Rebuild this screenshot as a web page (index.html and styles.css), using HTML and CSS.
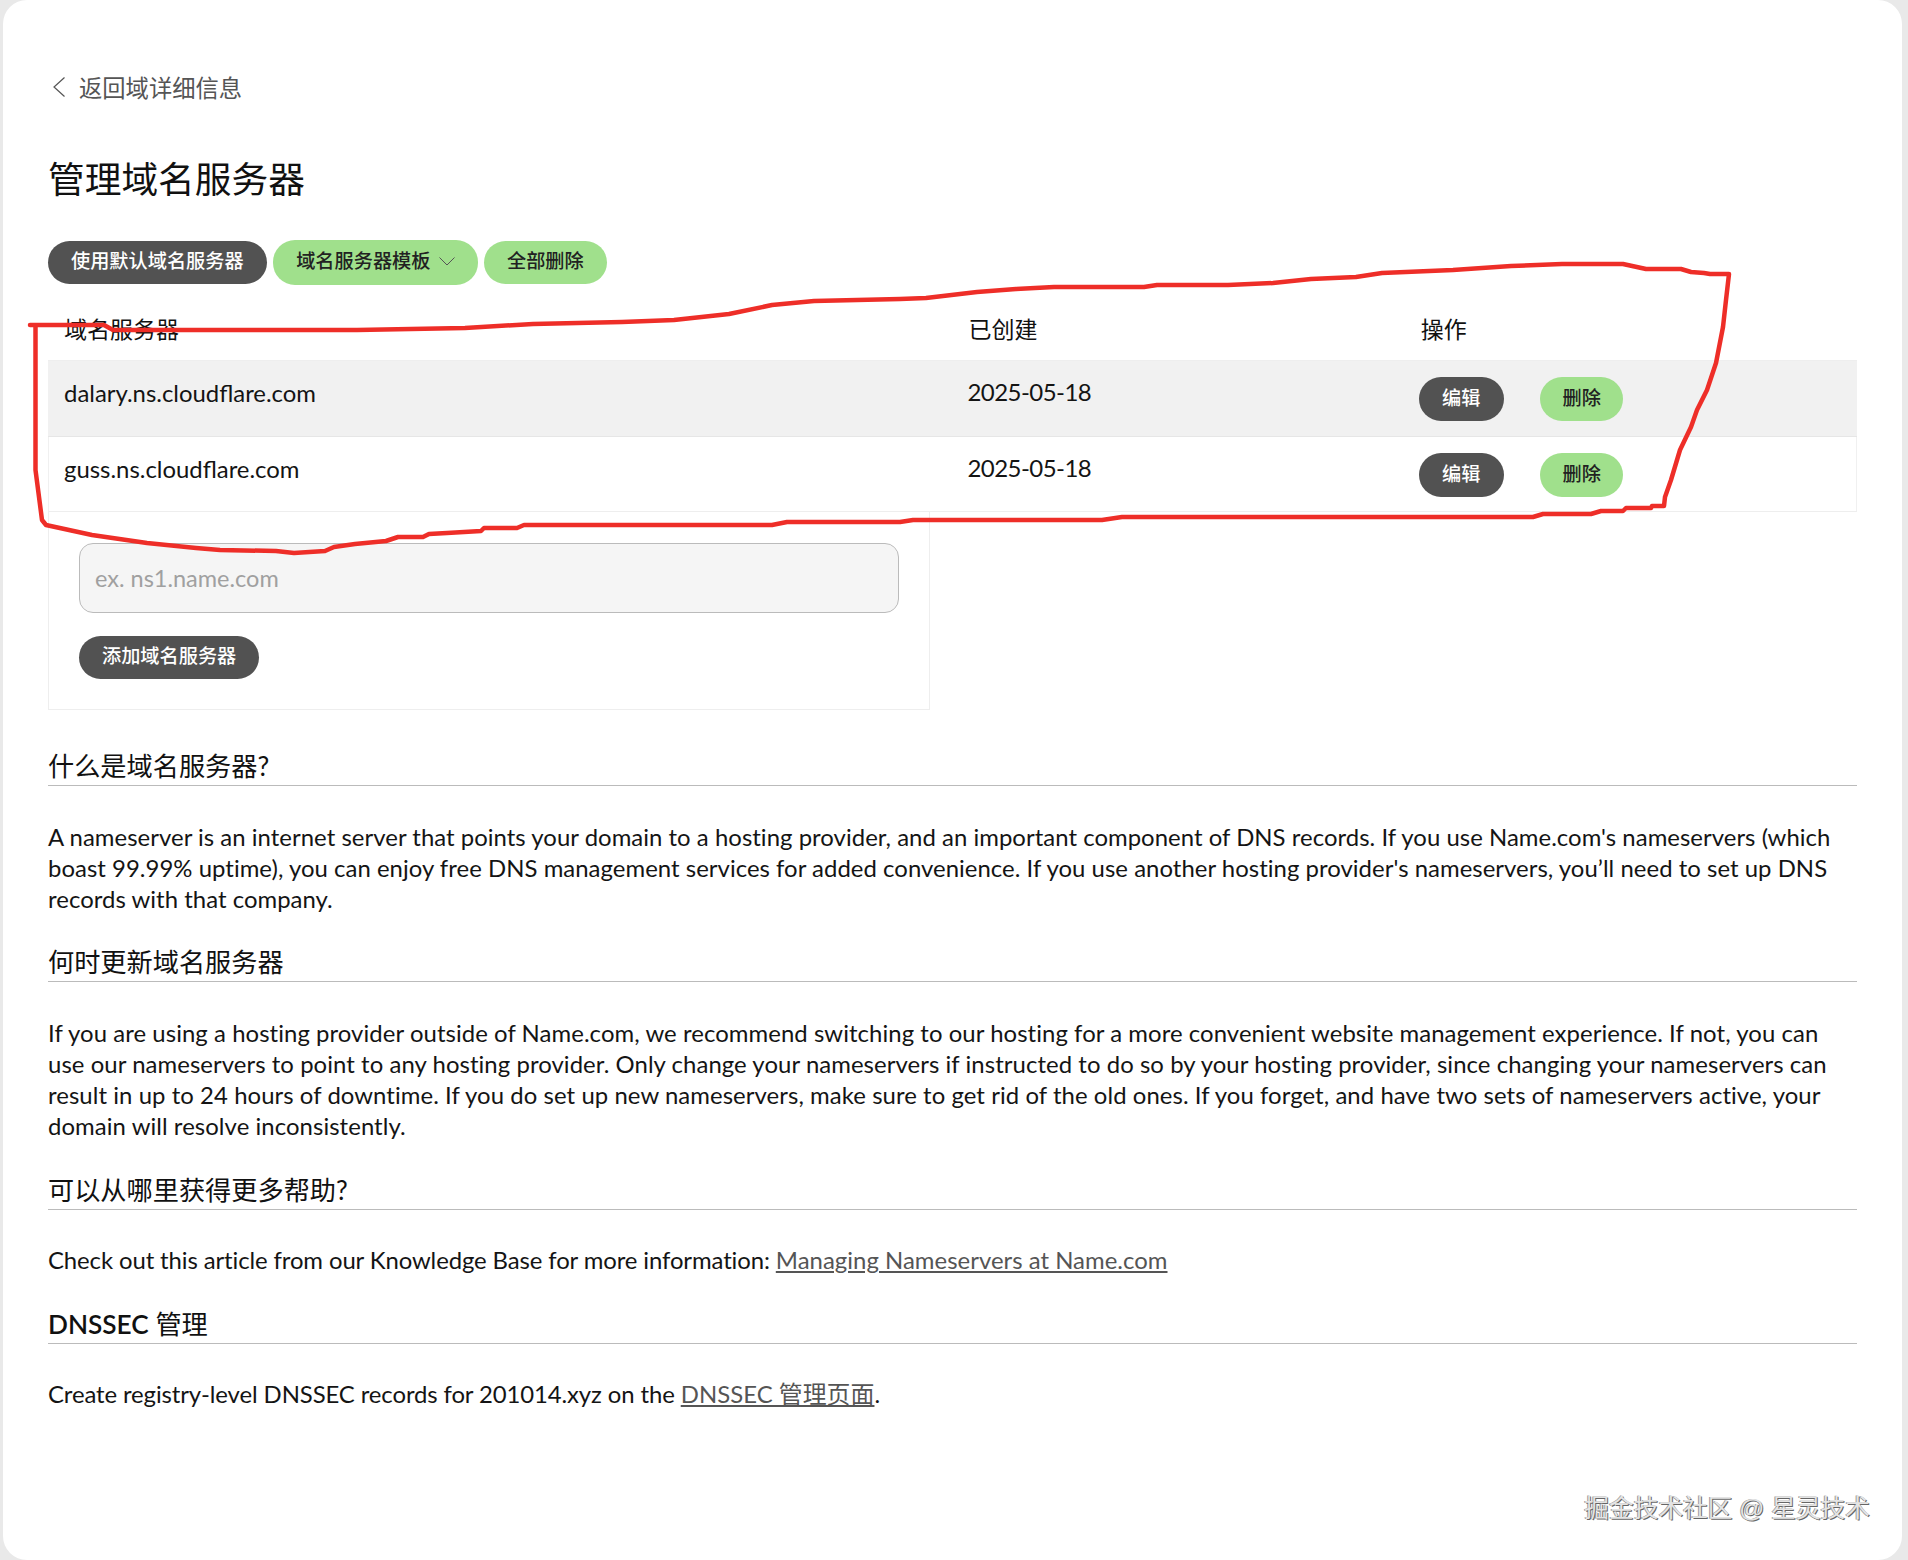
FILE: index.html
```html
<!DOCTYPE html>
<html lang="zh-CN">
<head>
<meta charset="utf-8">
<title>管理域名服务器</title>
<link rel="stylesheet" href="styles.css">
</head>
<body>
<main class="card">
  <a class="back" href="#">
    <svg class="back-icon" viewBox="0 0 12 20"><path d="M11.5 0.5 L1 10 L11.5 19.5"/></svg>
    <span>返回域详细信息</span>
  </a>
  <h1 class="title">管理域名服务器</h1>
  <div class="actions">
    <button class="btn btn-dark">使用默认域名服务器</button>
    <button class="btn btn-green btn-tall">域名服务器模板
      <svg class="caret" viewBox="0 0 16 9"><path d="M0.5 0.5 L8 8 L15.5 0.5"/></svg>
    </button>
    <button class="btn btn-green">全部删除</button>
  </div>
  <div class="table">
    <div class="row head">
      <div class="cell">域名服务器</div>
      <div class="cell">已创建</div>
      <div class="cell">操作</div>
    </div>
    <div class="row shaded">
      <div class="cell host">dalary.ns.cloudflare.com</div>
      <div class="cell date">2025-05-18</div>
      <div class="cell ops"><button class="btn btn-dark btn-edit">编辑</button><button class="btn btn-green btn-del">删除</button></div>
    </div>
    <div class="row plain">
      <div class="cell host">guss.ns.cloudflare.com</div>
      <div class="cell date">2025-05-18</div>
      <div class="cell ops"><button class="btn btn-dark btn-edit">编辑</button><button class="btn btn-green btn-del">删除</button></div>
    </div>
  </div>
  <form class="add-box">
    <input class="input" type="text" placeholder="ex. ns1.name.com">
    <button class="btn btn-dark" type="button">添加域名服务器</button>
  </form>

  <h2 class="heading h-first">什么是域名服务器?</h2>
  <p class="para para-mid">A nameserver is an internet server that points your domain to a hosting provider, and an important component of DNS records. If you use Name.com's nameservers (which boast 99.99% uptime), you can enjoy free DNS management services for added convenience. If you use another hosting provider's nameservers, you’ll need to set up DNS records with that company.</p>

  <h2 class="heading">何时更新域名服务器</h2>
  <p class="para para-wide">If you are using a hosting provider outside of Name.com, we recommend switching to our hosting for a more convenient website management experience. If not, you can use our nameservers to point to any hosting provider. Only change your nameservers if instructed to do so by your hosting provider, since changing your nameservers can result in up to 24 hours of downtime. If you do set up new nameservers, make sure to get rid of the old ones. If you forget, and have two sets of nameservers active, your domain will resolve inconsistently.</p>

  <h2 class="heading">可以从哪里获得更多帮助?</h2>
  <p class="para para-tight">Check out this article from our Knowledge Base for more information: <a href="#">Managing Nameservers at Name.com</a></p>

  <h2 class="heading"><span class="heading-strong">DNSSEC</span> 管理</h2>
  <p class="para para-tight">Create registry-level DNSSEC records for 201014.xyz on the <a href="#">DNSSEC 管理页面</a>.</p>
</main>

<svg class="annotation" viewBox="0 0 1908 1560">
  <polyline points="30,325 104,325 113,330 357,330 465,328 533,324 622,322 674,320 729,314 772,305 814,301 900,299 926,298 977,292 1016,289 1054,287 1144,287 1157,285 1228,285 1273,283 1311,279 1356,277 1382,273 1453,270 1511,266 1562,264 1623,264 1646,269 1681,269 1691,272 1704,273 1710,274 1729,274 1726,300 1723,327 1716,363 1707,390 1697,410 1691,427 1680,450 1671,480 1665,497 1664,506 1652,506 1651,508 1626,508 1623,511 1601,511 1591,514 1543,514 1533,517 1122,517 1102,520 913,520 900,522 787,522 772,525 524,525 517,528 484,528 481,531 447,533 429,534 423,537 398,537 386,541 355,544 334,547 325,551 294,553 276,551 220,550 196,548 147,543 92,535 46,525 42,520 35.5,470 35.5,326"/>
</svg>
<div class="watermark">掘金技术社区 @ 星灵技术</div>
</body>
</html>
```

FILE: styles.css
```css
* { box-sizing: border-box; }

html, body { margin: 0; padding: 0; }

body {
  position: relative;
  width: 1908px;
  height: 1560px;
  overflow: hidden;
  background: #e9e9e9;
  color: #141414;
  font-family: "Lato", "Noto Sans CJK SC", sans-serif;
  font-size: 23px;
}

.card {
  width: 1899px;
  height: 1560px;
  margin-left: 3px;
  padding: 72px 45px 0;
  background: #fff;
  border-radius: 24px;
}

.back {
  display: flex;
  align-items: center;
  gap: 14px;
  height: 30px;
  color: #555;
  text-decoration: none;
  font-size: 23.3px;
}

.back-icon {
  width: 12px;
  height: 20px;
  margin-left: 5px;
  fill: none;
  stroke: #555;
  stroke-width: 1.2;
}

.title {
  margin: 54px 0 0;
  font-size: 36.7px;
  line-height: 46px;
  font-weight: 400;
  color: #111;
}

.actions {
  display: flex;
  align-items: center;
  gap: 6.5px;
  margin-top: 38px;
  height: 45px;
}

.btn {
  display: inline-flex;
  align-items: center;
  justify-content: center;
  gap: 8px;
  height: 43px;
  padding: 0 23px 3px;
  border: 0;
  border-radius: 22px;
  font-family: inherit;
  font-size: 19.2px;
  font-weight: 500;
  line-height: 1;
  white-space: nowrap;
}

.btn-tall { height: 45px; }

.btn-dark { background: #525252; color: #fff; }

.btn-green { background: #a0e08c; color: #222; }

.btn-edit { width: 85px; height: 44px; padding: 0 0 3px; }

.btn-del { width: 83px; height: 44px; padding: 0 0 3px; }

.caret {
  width: 16px;
  height: 9px;
  fill: none;
  stroke: #555;
  stroke-width: 1;
}

.table { margin-top: 14px; }

.row {
  display: grid;
  grid-template-columns: 2fr 1fr 1fr;
}

.head { height: 62px; padding-top: 14px; border-bottom: 1px solid #eee; }

.head .cell { padding-top: 0; line-height: 32px; color: #111; }

.shaded {
  height: 76px;
  background: #f1f1f1;
  border-bottom: 1px solid #e6e6e6;
}

.plain {
  height: 75px;
  border-bottom: 1px solid #eee;
  box-shadow: inset 1px 0 0 #f0f0f0, inset -1px 0 0 #f0f0f0;
}

.cell {
  padding: 16px 16px 0;
  line-height: 31px;
}

.host { font-size: 23.9px; }

.date { font-size: 24px; letter-spacing: -0.55px; padding: 15px 16px 0 15px; }

.ops {
  display: flex;
  align-items: flex-start;
  gap: 36.5px;
  padding-left: 14px;
}

.add-box {
  display: flex;
  flex-direction: column;
  align-items: flex-start;
  gap: 23px;
  width: 882px;
  height: 198px;
  padding: 31px 30px 0;
  border: 1px solid #eee;
  border-top: 0;
}

.input {
  width: 820px;
  height: 70px;
  padding: 0 15px 1px;
  background: #f5f5f5;
  border: 1px solid #bbb;
  border-radius: 14px;
  font-family: inherit;
  font-size: 23.5px;
}

.input::placeholder { color: #a0a0a0; opacity: 1; }

.heading {
  margin: 31.35px 0 0;
  padding-bottom: 1px;
  font-size: 26.2px;
  line-height: 35px;
  font-weight: 400;
  color: #111;
  border-bottom: 1px solid #bbb;
}

.h-first { margin-top: 39px; }

.heading-strong { font-weight: 600; }

.para {
  margin: 34.5px 0 0;
  font-size: 23.9px;
  line-height: 31.15px;
  color: #141414;
}

.para-mid { letter-spacing: 0.04px; }

.para-wide { letter-spacing: 0.07px; }

.para-tight { letter-spacing: -0.1px; }

.para a { color: #555; text-decoration: underline; letter-spacing: 0.03px; }

.annotation {
  position: absolute;
  inset: 0;
  width: 1908px;
  height: 1560px;
  pointer-events: none;
}

.annotation polyline {
  fill: none;
  stroke: #ee2e28;
  stroke-width: 4.5;
  stroke-linejoin: round;
  stroke-linecap: round;
}

.watermark {
  position: absolute;
  right: 38px;
  bottom: 36px;
  font-family: "Liberation Sans", "Noto Sans CJK SC", sans-serif;
  font-size: 24.7px;
  line-height: 30px;
  color: #e4e4e4;
  text-shadow: 1px 1px 0 #666, -1px 0 0 #999;
  white-space: nowrap;
}
```
